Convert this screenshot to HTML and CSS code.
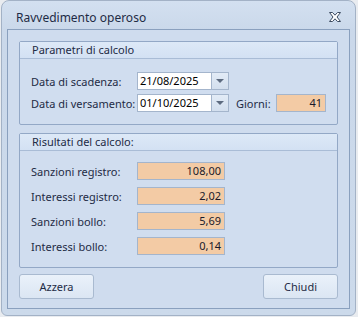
FILE: index.html
```html
<!DOCTYPE html>
<html>
<head>
    <title>Ravvedimento operoso</title>
    <link rel="stylesheet" href="styles.css">
</head>
<body>
    <div class="window">
        <div class="titlebar">
            <span class="title">Ravvedimento operoso</span>
            <svg class="close" width="14" height="12" viewBox="0 0 14 12">
                <path d="M1.5 1.5h3l2.5 2.7 2.5-2.7h3L9 6l3.5 4.5h-3L7 7.8l-2.5 2.7h-3L5 6z" fill="#fff" stroke="#3b4a60" stroke-width="1" stroke-linejoin="round"/>
            </svg>
        </div>

        <div class="client">
            <div class="group params">
                <div class="group-header">Parametri di calcolo</div>
                <div class="group-body">
                    <div class="row">
                        <label class="lbl">Data di scadenza:</label>
                        <div class="datebox">
                            <span class="date">21/08/2025</span>
                            <span class="drop"><i></i></span>
                        </div>
                    </div>
                    <div class="row">
                        <label class="lbl">Data di versamento:</label>
                        <div class="datebox">
                            <span class="date">01/10/2025</span>
                            <span class="drop"><i></i></span>
                        </div>
                        <label class="lbl-days">Giorni:</label>
                        <div class="value days">41</div>
                    </div>
                </div>
            </div>

            <div class="group results">
                <div class="group-header">Risultati del calcolo:</div>
                <div class="group-body">
                    <div class="row">
                        <label class="lbl">Sanzioni registro:</label>
                        <div class="value amount">108,00</div>
                    </div>
                    <div class="row">
                        <label class="lbl">Interessi registro:</label>
                        <div class="value amount">2,02</div>
                    </div>
                    <div class="row">
                        <label class="lbl">Sanzioni bollo:</label>
                        <div class="value amount">5,69</div>
                    </div>
                    <div class="row">
                        <label class="lbl">Interessi bollo:</label>
                        <div class="value amount">0,14</div>
                    </div>
                </div>
            </div>

            <div class="buttons">
                <button type="button">Azzera</button>
                <button type="button">Chiudi</button>
            </div>
        </div>
    </div>
</body>
</html>
```

FILE: styles.css
```css
body {
    margin: 0;
    padding: 0;
    background-color: #e9ecf0;
    font-family: "Noto Sans", "Open Sans", sans-serif;
    font-size: 11px;
    color: #1e2b45;
}

.window {
    box-sizing: border-box;
    width: 355px;
    height: 316px;
    margin-left: 1px;
    border: 1px solid #a3b2c6;
    border-radius: 8px 8px 6px 6px;
    background: linear-gradient(#d3e0f0, #cad8ea 30px, #ccdaeb);
    padding: 0 5px 6px 5px;
}

.titlebar {
    height: 28px;
    display: flex;
    align-items: center;
    justify-content: space-between;
    padding: 0 8px 0 9px;
}

.title {
    font-size: 12px;
    color: #1e2b45;
    margin-top: 4px;
}

.close {
    margin-top: 4px;
}

.client {
    box-sizing: border-box;
    height: 280px;
    border: 1px solid #8aa0be;
    background-color: #cfdcee;
    padding: 11px;
    display: flex;
    flex-direction: column;
}

.group {
    border: 1px solid #93a8c6;
    border-radius: 2px;
    background-color: #d0ddef;
}

.group-header {
    height: 16px;
    line-height: 16px;
    padding-left: 12px;
    background: linear-gradient(#dde9f7, #d3e1f3);
    border-bottom: 1px solid #a9bcd6;
}

.group-body {
    padding: 0 11px 0 11px;
    display: flex;
    flex-direction: column;
}

.params .group-body {
    padding-top: 13px;
    padding-bottom: 12px;
    gap: 4px;
}

.results {
    margin-top: 8px;
}

.results .group-body {
    padding-top: 11px;
    padding-bottom: 12px;
    gap: 7px;
}

.row {
    display: flex;
    align-items: center;
    height: 18px;
    white-space: nowrap;
}

.lbl {
    width: 106px;
    flex: none;
}

.datebox {
    display: flex;
    height: 18px;
    box-sizing: border-box;
    border: 1px solid #a4b5cc;
}

.date {
    width: 71px;
    background-color: #fff;
    padding-left: 2px;
    line-height: 16px;
    color: #000;
}

.drop {
    width: 16px;
    border-left: 1px solid #a4b5cc;
    background: linear-gradient(#e2ebf6, #d3dfee);
    display: flex;
    align-items: center;
    justify-content: center;
}

.drop i {
    width: 0;
    height: 0;
    border-left: 4px solid transparent;
    border-right: 4px solid transparent;
    border-top: 4px solid #5d6b80;
}

.lbl-days {
    margin-left: 7px;
    width: 41px;
}

.value {
    box-sizing: border-box;
    height: 18px;
    line-height: 16px;
    border: 1px solid #a4b5cc;
    background-color: #f3cba5;
    text-align: right;
    padding-right: 3px;
    color: #1a1a2a;
}

.days {
    width: 52px;
}

.amount {
    width: 88px;
}

.buttons {
    display: flex;
    justify-content: space-between;
    margin-top: 6px;
}

.buttons button {
    width: 75px;
    height: 25px;
    border: 1px solid #a9bad0;
    border-radius: 3px;
    background: linear-gradient(#eaf1fa, #dbe6f3);
    font-family: inherit;
    font-size: 11px;
    color: #1e2b45;
}
```
